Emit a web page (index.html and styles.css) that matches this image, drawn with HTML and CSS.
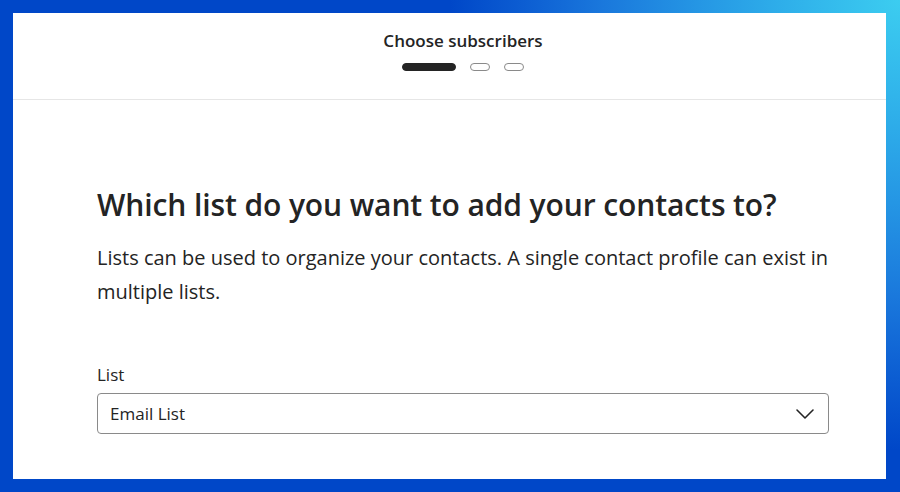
FILE: index.html
```html
<!DOCTYPE html>
<html lang="en">
<head>
    <meta charset="UTF-8">
    <title>Choose subscribers</title>
    <meta name="viewport" content="width=device-width, initial-scale=1.0">
    <link rel="stylesheet" href="styles.css">
</head>
<body>
    <div class="panel">
        <div class="wizard-header">
            <div class="wizard-title">Choose subscribers</div>
            <div class="steps">
                <span class="step active"></span>
                <span class="step"></span>
                <span class="step"></span>
            </div>
        </div>

        <div class="wizard-body">
            <div class="column">
                <h1 class="question">Which list do you want to add your contacts to?</h1>
                <p class="hint">Lists can be used to organize your contacts. A single contact profile can exist in multiple lists.</p>

                <label class="field-label" for="list">List</label>
                <div class="select" id="list">
                    <span class="select-value">Email List</span>
                    <svg class="chevron" width="20" height="12" viewBox="0 0 20 12">
                        <path d="M2 2 L10 10 L18 2" fill="none" stroke="#242424" stroke-width="1.6" stroke-linecap="round" stroke-linejoin="round"/>
                    </svg>
                </div>
            </div>
        </div>
    </div>
</body>
</html>
```
FILE: styles.css
```css
* {
    margin: 0;
    padding: 0;
    box-sizing: border-box;
}

body {
    height: 100vh;
    padding: 13px 14px 13px 13px;
    font-family: "Open Sans", Arial, sans-serif;
    color: #242424;
    background:
        radial-gradient(circle 450px at 100% 0%, #3ccdf0 0%, #2fb0ea 25%, #2596e4 45%, #1a78dc 66%, #0c5dd2 84%, #0047c8 100%),
        #0047c8;
}

.panel {
    height: 466px;
    background-color: #fff;
    display: flex;
    flex-direction: column;
}

.wizard-header {
    padding: 17px 0 28px 27px;
    border-bottom: 1px solid #e6e6e6;
    display: flex;
    flex-direction: column;
    align-items: center;
}

.wizard-title {
    font-size: 17px;
    font-weight: 600;
    line-height: 22px;
}

.steps {
    display: flex;
    gap: 14px;
    margin-top: 11px;
}

.step {
    width: 20px;
    height: 8px;
    border: 1px solid #8a8a8a;
    border-radius: 4px;
    background-color: #fff;
}

.step.active {
    width: 54px;
    border-color: #242424;
    background-color: #242424;
}

.wizard-body {
    padding-left: 27px;
}

.column {
    width: 732px;
    margin: 0 auto;
    display: flex;
    flex-direction: column;
}

.question {
    margin-top: 85px;
    font-size: 30px;
    font-weight: 600;
    line-height: 40px;
    letter-spacing: -0.1px;
}

.hint {
    margin-top: 16px;
    font-size: 20px;
    line-height: 34px;
}

.field-label {
    margin-top: 54px;
    font-size: 17px;
    line-height: 24px;
}

.select {
    margin-top: 6px;
    height: 41px;
    padding: 0 12px;
    border: 1px solid #8a8a8a;
    border-radius: 4px;
    display: flex;
    align-items: center;
    justify-content: space-between;
}

.select-value {
    font-size: 17px;
    line-height: 24px;
}

.chevron {
    margin-right: 1px;
}
```
